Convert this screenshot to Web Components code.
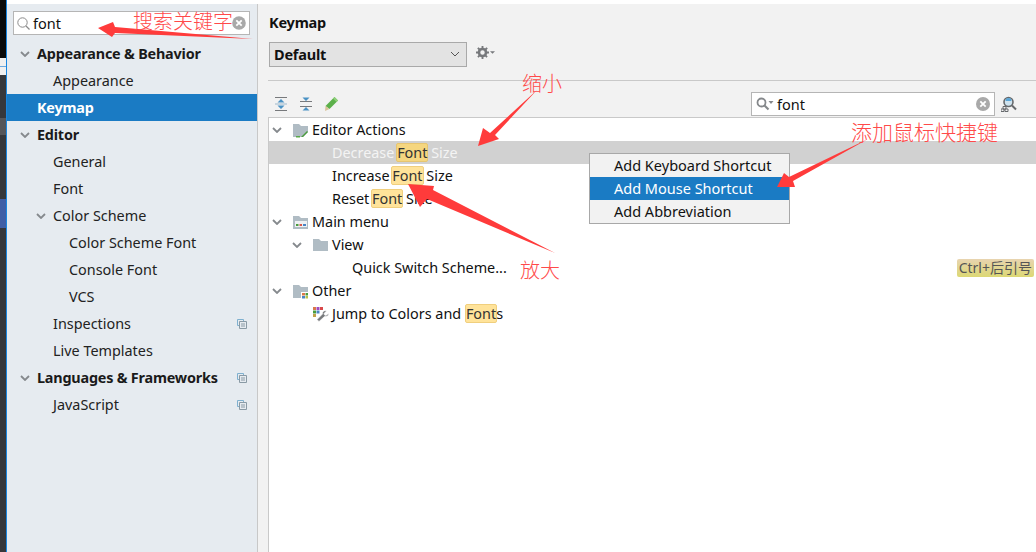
<!DOCTYPE html>
<html>
<head>
<meta charset="utf-8">
<title>Keymap</title>
<style>
html, body { margin: 0; padding: 0; background: #fff; }
body { width: 1036px; height: 552px; overflow: hidden; position: relative; display: flex; font: 14.4px "Noto Sans", "Noto Sans CJK SC", sans-serif; color: #111; }
</style>
</head>
<body>
<side-strip></side-strip>
<settings-window>
    <settings-sidebar slot="side">
        <nav-row arrow bold>Appearance &amp; Behavior</nav-row>
        <nav-row level="1">Appearance</nav-row>
        <nav-row selected bold>Keymap</nav-row>
        <nav-row arrow bold>Editor</nav-row>
        <nav-row level="1">General</nav-row>
        <nav-row level="1">Font</nav-row>
        <nav-row level="1" arrow>Color Scheme</nav-row>
        <nav-row level="2">Color Scheme Font</nav-row>
        <nav-row level="2">Console Font</nav-row>
        <nav-row level="2">VCS</nav-row>
        <nav-row level="1" badge>Inspections</nav-row>
        <nav-row level="1">Live Templates</nav-row>
        <nav-row arrow bold badge>Languages &amp; Frameworks</nav-row>
        <nav-row level="1" badge>JavaScript</nav-row>
    </settings-sidebar>
    <keymap-panel slot="main">
        <action-row arrow icon="editor">Editor Actions</action-row>
        <action-row level="1" selected>Decrease <hl-text dim>Font</hl-text> Size</action-row>
        <action-row level="1">Increase <hl-text>Font</hl-text> Size</action-row>
        <action-row level="1">Reset <hl-text>Font</hl-text> Size</action-row>
        <action-row arrow icon="menu">Main menu</action-row>
        <action-row level="1" arrow icon="folder">View</action-row>
        <action-row level="2" shortcut="Ctrl+后引号">Quick Switch Scheme...</action-row>
        <action-row arrow icon="other">Other</action-row>
        <action-row level="1" icon="jump">Jump to Colors and <hl-text style="margin-left:0">Font</hl-text>s</action-row>
    </keymap-panel>
</settings-window>
<context-menu></context-menu>
<annot-layer></annot-layer>

<script>
const ICONS = {
    editor: `<svg width="16" height="16" viewBox="0 0 16 16"><path d="M0 2h6l2 2h7v6l-5 5H0z" fill="#b0bcc4"/><path d="M8 15l6-6 1 1-5 5z" fill="#4a9c3c"/><path d="M3 14h4v1.500H3z" fill="#5aa84a"/></svg>`,
    menu: `<svg width="16" height="16" viewBox="0 0 16 16"><path d="M0 2h6l2 2h7v11H0z" fill="#b0bcc4"/><path d="M2 7h12v6H2z" fill="#eef1f3"/><path d="M3 10h2.500v2H3z" fill="#4a9c3c"/><path d="M6.500 10H9v2H6.500z" fill="#d9584a"/><path d="M10 10h3v2h-3z" fill="#4a84c4"/></svg>`,
    folder: `<svg width="16" height="16" viewBox="0 0 16 16"><path d="M0 2h6l2 2h7v10H0z" fill="#b0bcc4"/></svg>`,
    other: `<svg width="16" height="16" viewBox="0 0 16 16"><path d="M0 2h6l2 2h7v5H8v6H0z" fill="#b0bcc4"/><path d="M9 10h3v2.500H9z" fill="#d9784a"/><path d="M12.500 10H15v2.500h-2.500z" fill="#4a9c3c"/><path d="M9 13h3v2.500H9z" fill="#4a84c4"/><path d="M12.500 13H15v2.500h-2.500z" fill="#b9c04a"/></svg>`,
    jump: `<svg width="16" height="16" viewBox="0 0 16 16"><path d="M0 1h3v3H0z" fill="#d9784a"/><path d="M3.500 1h3v3h-3z" fill="#a04ac0"/><path d="M7 1h3v3H7z" fill="#d9484a"/><path d="M0 4.500h3v3H0z" fill="#4a9c3c"/><path d="M3.500 4.500h3v3h-3z" fill="#4a84c4"/><path d="M0 8h3v3H0z" fill="#c0a04a"/><path d="M15.500 7.500l-2.500 2-1.500-.5-.5-1.500L13.500 5c-2-1-4.500.5-4 3l-5.500 5.500 2 2L11.500 10.500c2.500.5 4.500-1 4-3z" fill="#77797c" stroke="#fff" stroke-width=".6"/></svg>`
};
const CHEVRON = `<svg width="10" height="6" viewBox="0 0 10 6"><path d="M1 1l4 4 4-4" fill="none" stroke="#85898d" stroke-width="1.800"/></svg>`;

class SideStrip extends HTMLElement {
    constructor() {
        super();
        this.attachShadow({ mode: "open" });
        this.shadowRoot.innerHTML = `
            <style>
            :host { display: flex; flex-direction: column; flex: none; width: 6px; height: 552px; border-right: 1px solid #1a86e0; box-sizing: content-box; background: #36373b; }
            .black { height: 58px; background: #0a0a0a; }
            .light { height: 17px; background: #f0f0f0; }
            .line { height: 1px; margin-top: 8px; background: #6aa8e0; }
            .grey { height: 17px; margin-top: 43px; background: #55565a; }
            .blue { height: 29px; margin-top: 64px; background: #3f5ea6; }
            </style>
            <div class="black"></div>
            <div class="light"><div class="line"></div></div>
            <div class="grey"></div>
            <div class="blue"></div>
        `;
    }
}
customElements.define("side-strip", SideStrip);

class SettingsWindow extends HTMLElement {
    constructor() {
        super();
        this.attachShadow({ mode: "open" });
        this.shadowRoot.innerHTML = `
            <style>
            :host { display: flex; flex: 1; min-width: 0; height: 552px; box-sizing: border-box; padding-top: 4px; background: #fff; }
            </style>
            <slot name="side"></slot>
            <slot name="main"></slot>
        `;
    }
}
customElements.define("settings-window", SettingsWindow);

class SettingsSidebar extends HTMLElement {
    constructor() {
        super();
        this.attachShadow({ mode: "open" });
        this.shadowRoot.innerHTML = `
            <style>
            :host { display: block; flex: none; width: 251px; box-sizing: border-box; padding-top: 7px; background: #e6ebf0; border-right: 1px solid #c8c8c8; }
            .search { display: flex; align-items: center; box-sizing: border-box; height: 24px; margin: 0 7px 5px 6px; padding: 0 3px; gap: 3px; background: #fff; border: 1px solid #b5b5b5; }
            .search span { flex: 1; color: #111; font-size: 14.5px; }
            </style>
            <div class="search">
                <svg width="13" height="13" viewBox="0 0 13 13"><circle cx="5.500" cy="5.500" r="4.700" fill="none" stroke="#8a8a8a" stroke-width="1"/><path d="M9 9l3.500 3.500" stroke="#8a8a8a" stroke-width="1.200"/></svg>
                <span>font</span>
                <svg width="14" height="14" viewBox="0 0 14 14"><circle cx="7" cy="7" r="6.800" fill="#a9a9a9"/><path d="M4.300 4.300l5.400 5.400M9.700 4.300l-5.400 5.400" stroke="#fff" stroke-width="1.800"/></svg>
            </div>
            <slot></slot>
        `;
    }
}
customElements.define("settings-sidebar", SettingsSidebar);

class NavRow extends HTMLElement {
    constructor() {
        super();
        this.attachShadow({ mode: "open" });
    }
    connectedCallback() {
        const level = Number(this.getAttribute("level") || 0);
        this.shadowRoot.innerHTML = `
            <style>
            :host { display: flex; align-items: center; height: 27px; box-sizing: border-box; padding-left: ${7 + level * 16}px; padding-right: 10px; color: #222; }
            :host([bold]) { font-weight: 700; color: #1a1a1a; letter-spacing: -0.2px; }
            :host([selected]) { background: #1a7bc4; color: #fff; }
            .arrow { flex: none; width: 23px; display: flex; justify-content: center; padding-right: 1px; box-sizing: border-box; }
            .label { flex: 1; white-space: nowrap; }
            </style>
            <span class="arrow">${this.hasAttribute("arrow") ? CHEVRON : ""}</span>
            <span class="label"><slot></slot></span>
            ${this.hasAttribute("badge") ? `<svg width="10" height="10" viewBox="0 0 10 10"><path d="M.5.5h6v2" fill="none" stroke="#7fb0cf"/><path d="M.5.5v6h2" fill="none" stroke="#7fb0cf"/><path d="M2.500 2.500h7v7h-7z" fill="none" stroke="#8a9aa5"/><path d="M4 5h4M4 7h4" stroke="#8a9aa5"/></svg>` : ""}
        `;
    }
}
customElements.define("nav-row", NavRow);

class KeymapPanel extends HTMLElement {
    constructor() {
        super();
        this.attachShadow({ mode: "open" });
        this.shadowRoot.innerHTML = `
            <style>
            :host { display: flex; flex-direction: column; flex: 1; min-width: 0; box-sizing: border-box; padding: 9px 0 0 10px; background: #f2f2f2; }
            h1 { margin: -1px 0 10px 1px; font-size: 14.5px; letter-spacing: -0.2px; line-height: 20px; font-weight: 700; color: #111; }
            .scheme { display: flex; align-items: center; gap: 9px; margin-left: 1px; height: 25px; }
            .select { display: flex; align-items: center; justify-content: space-between; box-sizing: border-box; width: 198px; height: 25px; padding: 0 6px 2px 4px; background: #e3e3e3; border: 1px solid #a9a9a9; font-weight: 700; font-size: 14.5px; letter-spacing: -0.2px; }
            .gear { display: flex; align-items: center; gap: 1px; margin-top: -4px; }
            hr { height: 1px; margin: 13px 0 0; border: 0; background: #c9c9c9; }
            .toolbar { display: flex; align-items: center; height: 36px; box-sizing: border-box; padding: 9px 0 0 7px; gap: 13px; }
            .toolbar .find { display: flex; align-items: center; gap: 3px; box-sizing: border-box; width: 244px; height: 24px; margin-left: auto; padding: 0 4px; background: #fff; border: 1px solid #b5b5b5; font-size: 14.5px; }
            .find span { flex: 1; }
            .finder { margin: 0 19px 0 -7px; }
            .tree { flex: 1; background: #fff; border-top: 1px solid #c9c9c9; border-left: 1px solid #c9c9c9; }
            </style>
            <h1>Keymap</h1>
            <div class="scheme">
                <div class="select">Default <svg width="10" height="6" viewBox="0 0 10 6"><path d="M1 1l4 4 4-4" fill="none" stroke="#555" stroke-width="1"/></svg></div>
                <div class="gear">
                    <svg width="13" height="13" viewBox="0 0 14 14"><circle cx="7" cy="7" r="3.800" fill="none" stroke="#77797c" stroke-width="2.800"/><path d="M7 0v14M0 7h14M2 2l10 10M12 2L2 12" stroke="#77797c" stroke-width="2" stroke-dasharray="2.500 9"/><circle cx="7" cy="7" r="1.500" fill="#f2f2f2"/></svg>
                    <svg width="5" height="3" viewBox="0 0 6 3"><path d="M0 0h6L3 3z" fill="#77797c"/></svg>
                </div>
            </div>
            <hr>
            <div class="toolbar">
                <svg width="12" height="14" viewBox="0 0 12 14"><path d="M0 .5h12M0 13.500h12" stroke="#77797c"/><path d="M0 7h12" stroke="#9cb8cc"/><path d="M6 2l3.500 3.500h-7zM6 12L2.500 8.500h7z" fill="#4a92c4"/></svg>
                <svg width="12" height="14" viewBox="0 0 12 14"><path d="M0 4.500h12M0 9.500h12" stroke="#77797c"/><path d="M6 4L2.500 .5h7zM6 10l3.500 3.500h-7z" fill="#4a92c4"/></svg>
                <svg width="13" height="14" viewBox="0 0 13 14"><path d="M9.500 0L13 3.500 4.500 12 .5 9z" fill="#5cb04a"/><path d="M9.500 0L13 3.500l-1.500 1.500L8 1.500z" fill="#8fd07a"/><path d="M.5 9l4 3-4.500 2z" fill="#d8c49a"/></svg>
                <div class="find">
                    <svg width="18" height="14" viewBox="0 0 18 14"><circle cx="5.500" cy="5.500" r="4" fill="none" stroke="#85888b" stroke-width="1.800"/><path d="M8.500 8.500l4 4" stroke="#85888b" stroke-width="2.200"/><path d="M12.500 4h5L15 7z" fill="#85888b"/></svg>
                    <span>font</span>
                    <svg width="14" height="14" viewBox="0 0 14 14"><circle cx="7" cy="7" r="7" fill="#a9a9a9"/><path d="M4.300 4.300l5.400 5.400M9.700 4.300l-5.400 5.400" stroke="#fff" stroke-width="1.800"/></svg>
                </div>
                <svg class="finder" width="16" height="16" viewBox="0 0 16 16"><circle cx="7.500" cy="6" r="4.500" fill="#cfe3ef" stroke="#66696c" stroke-width="1.600"/><path d="M4.500 5a3 3 0 0 1 6 0z" fill="#5aa6d8"/><path d="M11 9.500l4 4" stroke="#66696c" stroke-width="2"/><path d="M2 10.500h3v2.500H2zM0 13h3v2.500H0zM4 13h3v2.500H4z" fill="none" stroke="#66696c"/></svg>
            </div>
            <div class="tree"><slot></slot></div>
        `;
    }
}
customElements.define("keymap-panel", KeymapPanel);

class ActionRow extends HTMLElement {
    constructor() {
        super();
        this.attachShadow({ mode: "open" });
    }
    connectedCallback() {
        const level = Number(this.getAttribute("level") || 0);
        const icon = ICONS[this.getAttribute("icon")] || "";
        const shortcut = this.getAttribute("shortcut");
        this.shadowRoot.innerHTML = `
            <style>
            :host { display: flex; align-items: center; height: 23px; box-sizing: border-box; padding-left: ${level * 20}px; padding-right: 2px; color: #111; white-space: nowrap; }
            :host([selected]) { background: #d1d1d1; color: #f4f4f4; }
            .arrow { flex: none; width: 16px; display: flex; justify-content: center; }
            .icon { flex: none; width: 16px; height: 16px; margin: 0 3px 0 8px; }
            .label { flex: 1; }
            .keys { padding: 0 2px; height: 18px; line-height: 18px; font-size: 14px; border-radius: 2px; color: #555; background: linear-gradient(#e8d4b0, #dcd874); }
            </style>
            <span class="arrow">${this.hasAttribute("arrow") ? CHEVRON : ""}</span>
            <span class="icon">${icon}</span>
            <span class="label"><slot></slot></span>
            ${shortcut ? `<span class="keys">${shortcut}</span>` : ""}
        `;
    }
}
customElements.define("action-row", ActionRow);

class HlText extends HTMLElement {
    constructor() {
        super();
        this.attachShadow({ mode: "open" });
        this.shadowRoot.innerHTML = `
            <style>
            :host { display: inline-block; height: 19px; line-height: 18px; box-sizing: border-box; margin: 0 -1px 0 -2px; color: #333; background: #ffe39a; border: 1px solid #f0cf7e; border-radius: 2px; }
            :host([dim]) { background: #f5d67f; border-color: #e6c570; }
            </style>
            <slot></slot>
        `;
    }
}
customElements.define("hl-text", HlText);

class ContextMenu extends HTMLElement {
    constructor() {
        super();
        this.attachShadow({ mode: "open" });
        this.shadowRoot.innerHTML = `
            <style>
            :host { position: absolute; left: 589px; top: 153px; width: 201px; box-sizing: border-box; background: #f2f2f2; border: 1px solid #a8a8a8; color: #111; font-size: 14.5px; }
            div { height: 23px; line-height: 23px; padding-left: 24px; white-space: nowrap; }
            .on { background: #1a7bc4; color: #fff; }
            </style>
            <div>Add Keyboard Shortcut</div>
            <div class="on">Add Mouse Shortcut</div>
            <div>Add Abbreviation</div>
        `;
    }
}
customElements.define("context-menu", ContextMenu);

// red notes drawn over the screenshot, free placed
class AnnotLayer extends HTMLElement {
    constructor() {
        super();
        this.attachShadow({ mode: "open" });
        this.shadowRoot.innerHTML = `
            <style>
            :host { position: absolute; inset: 0; pointer-events: none; font: 20px "Noto Sans CJK SC", sans-serif; font-weight: 300; color: #ff4a4a; }
            svg { position: absolute; left: 0; top: 0; }
            span { position: absolute; white-space: nowrap; line-height: 24px; }
            </style>
            <svg width="1036" height="552" viewBox="0 0 1036 552">
                <g fill="#ff3b3b">
                    <polygon points="98,28 113,22 115,27 253,39 115,33 112,37"/>
                    <polygon points="478,146 483,128 490,133 537,90 495,135 499,139"/>
                    <polygon points="408,184 434,186 433,190 555,253 427,199 420,207"/>
                    <polygon points="777,187 784,173 789,177 868,139 793,181 795,187"/>
                </g>
            </svg>
            <span style="left:133px;top:9px">搜索关键字</span>
            <span style="left:522px;top:71px">缩小</span>
            <span style="left:520px;top:258px">放大</span>
            <span style="left:851px;top:119px;font-size:21px">添加鼠标快捷键</span>
        `;
    }
}
customElements.define("annot-layer", AnnotLayer);
</script>
</body>
</html>
